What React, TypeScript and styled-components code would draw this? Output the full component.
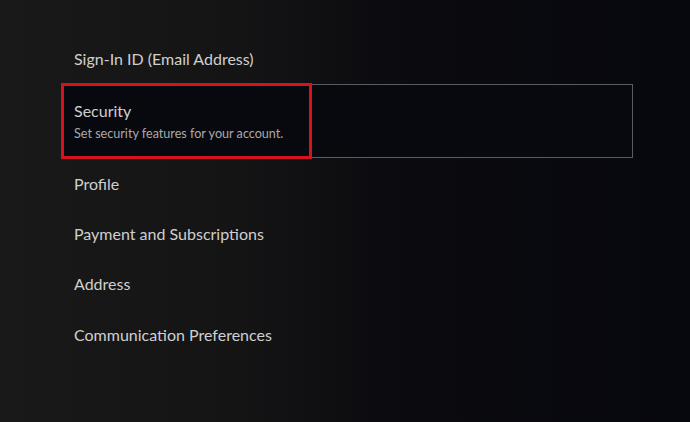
import styled, { createGlobalStyle } from "styled-components";

const GlobalStyle = createGlobalStyle`
  html, body {
    margin: 0;
    padding: 0;
    background: #0b0b10;
  }
  body {
    font-family: Lato, "Open Sans", sans-serif;
  }
`;

const SScreen = styled.div`
  width: 690px;
  height: 422px;
  box-sizing: border-box;
  padding: 34px 0 0 62px;
  background: linear-gradient(90deg, #191919 0%, #141415 35%, #0a0a0f 60%, #07080e 100%);
  overflow: hidden;
`;

const SList = styled.div`
  width: 571px;
  display: flex;
  flex-direction: column;
`;

const SRow = styled.div<{ $selected?: boolean }>`
  position: relative;
  box-sizing: border-box;
  display: flex;
  flex-direction: column;
  justify-content: center;
  min-height: ${({ $selected }) => ($selected ? "74px" : "50.4px")};
  padding: 0 11px;
  border: 1px solid ${({ $selected }) => ($selected ? "#5a5c63" : "transparent")};
  background: ${({ $selected }) => ($selected ? "#08090f" : "transparent")};
`;

const STitle = styled.span`
  color: #cfcfd0;
  font-size: 16px;
  line-height: 22px;
`;

const SSub = styled.span`
  color: #a9a9ab;
  font-size: 12.6px;
  line-height: 18px;
  margin-top: 3px;
`;

const SHighlight = styled.div`
  position: absolute;
  left: -2px;
  top: -2px;
  width: 251px;
  height: 76px;
  box-sizing: border-box;
  border: 3px solid #d6121d;
  pointer-events: none;
`;

const items = [
  { id: 1, title: "Sign-In ID (Email Address)" },
  { id: 2, title: "Security", sub: "Set security features for your account.", selected: true },
  { id: 3, title: "Profile" },
  { id: 4, title: "Payment and Subscriptions" },
  { id: 5, title: "Address" },
  { id: 6, title: "Communication Preferences" },
];

const App = () => {
  return (
    <>
      <GlobalStyle />
      <SScreen>
        <SList>
          {items.map((i) => (
            <SRow key={i.id} $selected={i.selected}>
              <STitle>{i.title}</STitle>
              {i.sub && <SSub>{i.sub}</SSub>}
              {i.selected && <SHighlight />}
            </SRow>
          ))}
        </SList>
      </SScreen>
    </>
  );
};
export default App;
